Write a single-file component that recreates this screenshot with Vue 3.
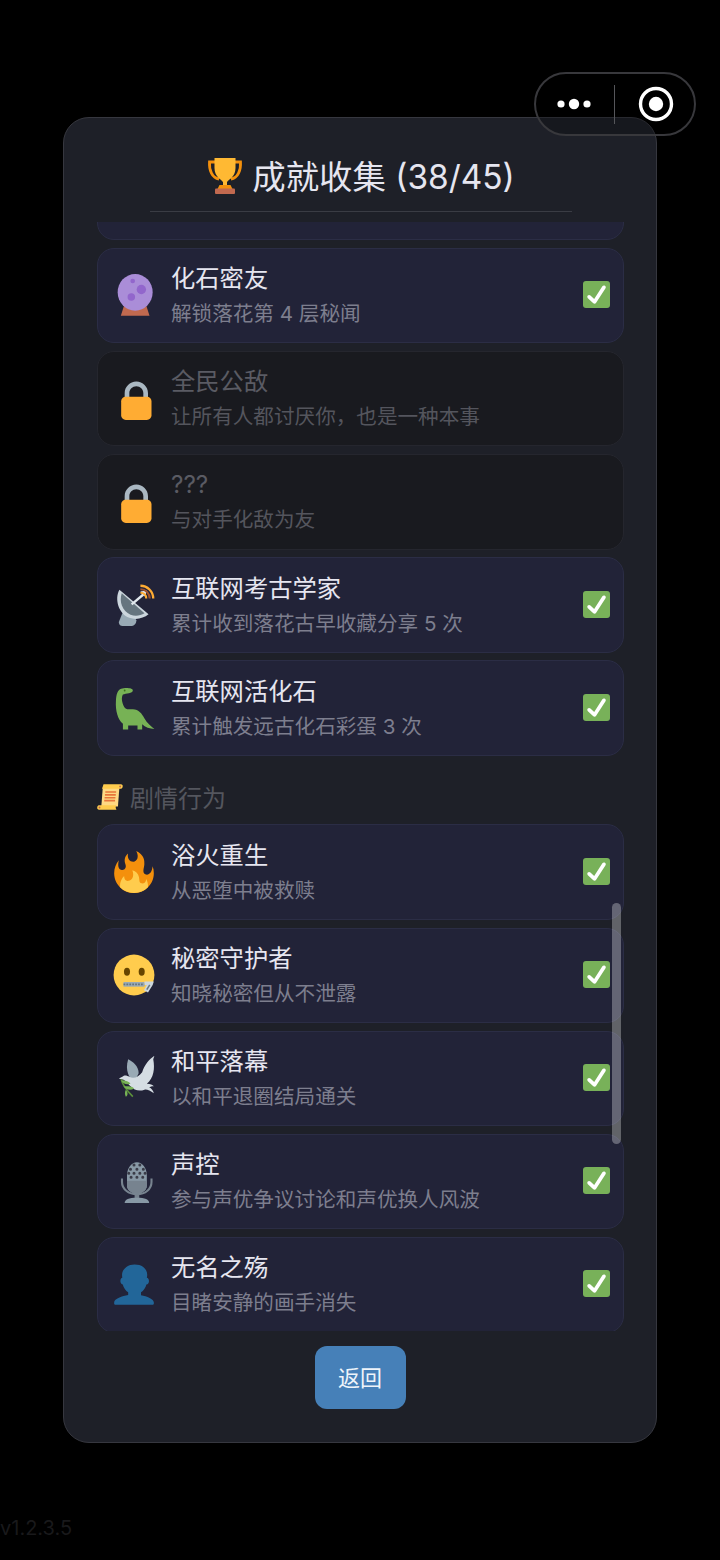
<template>
  <div class="page">
    <div class="capsule">
      <svg class="dots" width="40" height="14" viewBox="0 0 40 14">
        <circle cx="7" cy="7" r="3.6" fill="#fff" />
        <circle cx="20" cy="7" r="5.2" fill="#fff" />
        <circle cx="33" cy="7" r="3.6" fill="#fff" />
      </svg>
      <div class="capsule-line"></div>
      <svg class="target" width="36" height="36" viewBox="0 0 36 36">
        <circle cx="18" cy="18" r="15.5" fill="none" stroke="#fff" stroke-width="3.4" />
        <circle cx="18" cy="18" r="7.2" fill="#fff" />
      </svg>
    </div>

    <div class="panel">
      <div class="head">
        <h1 class="title">
          <svg class="title-icon" viewBox="0 0 36 36">
            <path d="M9 4H2.500C2 12 5 20 12 21M27 4h6.500C34 12 31 20 24 21" fill="none" stroke="#F4900C" stroke-width="2.8" />
            <path d="M7.500 0h21v10c0 9-6.500 11-8.500 14v5h-4v-5c-2-3-8.500-5-8.500-14z" fill="#FFB933" />
            <path d="M12.500 27h11l2 4h-15z" fill="#F4900C" />
            <rect x="8" y="30.500" width="20" height="5.500" rx="1" fill="#C1694F" />
          </svg>
          <span>成就收集 (38/45)</span>
        </h1>
        <div class="head-line"></div>
      </div>

      <div class="list-wrap">
        <div class="list">
          <div class="card card-cut"></div>
          <AchievementCard v-for="item in fossil" :key="item.name" :item="item" />

          <div class="section">
            <svg class="section-icon" viewBox="0 0 36 36">
              <path d="M8 5h23l-2 26H6z" fill="#FFD983" />
              <path d="M9 .5h24c2 0 3 1.500 2.500 3.500-.4 1.500-1.500 2.500-3 2.500H7z" fill="#FFCC4D" />
              <path d="M2.500 29.500h24c-.8 1-1 4 .5 6H3c-2 0-3-1.500-2.700-3 .3-1.500 1-3 2.200-3z" fill="#FFCC4D" />
              <path d="M11.500 11h15M11 15h15M10.500 19h15M10 23h15" stroke="#E8763A" stroke-width="2.200" />
              <circle cx="3.500" cy="32.500" r="1.300" fill="#C1694F" />
              <circle cx="32" cy="3.500" r="1.300" fill="#C1694F" />
            </svg>
            <span>剧情行为</span>
          </div>
          <AchievementCard v-for="item in story" :key="item.name" :item="item" />
        </div>
      </div>

      <div class="foot">
        <button class="back">返回</button>
      </div>
      <div class="scrollbar"></div>
    </div>

    <div class="version">v1.2.3.5</div>
  </div>
</template>

<script setup>
import { h } from 'vue';

const fossil = [
  { name: '化石密友', desc: '解锁落花第 4 层秘闻', icon: 'ball', done: true },
  { name: '全民公敌', desc: '让所有人都讨厌你，也是一种本事', icon: 'lock', done: false },
  { name: '???', desc: '与对手化敌为友', icon: 'lock', done: false },
  { name: '互联网考古学家', desc: '累计收到落花古早收藏分享 5 次', icon: 'dish', done: true },
  { name: '互联网活化石', desc: '累计触发远古化石彩蛋 3 次', icon: 'dino', done: true },
];

const story = [
  { name: '浴火重生', desc: '从恶堕中被救赎', icon: 'fire', done: true },
  { name: '秘密守护者', desc: '知晓秘密但从不泄露', icon: 'zip', done: true },
  { name: '和平落幕', desc: '以和平退圈结局通关', icon: 'dove', done: true },
  { name: '声控', desc: '参与声优争议讨论和声优换人风波', icon: 'mic', done: true },
  { name: '无名之殇', desc: '目睹安静的画手消失', icon: 'bust', done: true },
];

const p = (d, fill, extra = {}) => h('path', { d, fill, ...extra });

const icons = {
  ball: () => [
    p('M8.500 27c5 3.500 14 3.500 19 0l2.800 8.700H5.700z', '#C1694F'),
    h('ellipse', { cx: 18, cy: 15.700, rx: 15, ry: 15.700, fill: '#AA8DD8' }),
    h('circle', { cx: 23.300, cy: 13.300, r: 4, fill: '#9266CC' }),
    h('circle', { cx: 14.700, cy: 19.700, r: 3.200, fill: '#9266CC' }),
    h('circle', { cx: 15.900, cy: 6, r: 2, fill: '#9266CC' }),
  ],
  lock: () => [
    p('M18 3C12.477 3 8 7.477 8 13v10h4V13c0-3.313 2.687-6 6-6s6 2.687 6 6v10h4V13c0-5.523-4.477-10-10-10z', '#AAB8C2'),
    p('M31 32c0 2.209-1.791 4-4 4H9c-2.209 0-4-1.791-4-4V20c0-2.209 1.791-4 4-4h18c2.209 0 4 1.791 4 4v12z', '#FFAC33'),
  ],
  dish: () => [
    p('M8 25l10 2 2 4c0 3-2 5-5 5H9c-3 0-4-1.500-4-3.500z', '#99AAB5'),
    p('M5.500 5C1 13 5 26 14 29c6 2 12 .5 16.500-3z', '#CCD6DD'),
    p('M7.500 8C5 15 8 23.500 15 26.300c4.500 1.700 8.500 .7 12-1.300z', '#66757F'),
    p('M16 17.500L26 9', 'none', { stroke: '#E1E8ED', 'stroke-width': 2 }),
    p('M23.500 6.500l5.500-1-1.500 5.500z', '#E1E8ED'),
    p('M23.500 1.500c6 0 11 5 11 11', 'none', { stroke: '#FFAC33', 'stroke-width': 2 }),
    p('M23.500 4.500c4.500 0 8 3.500 8 8', 'none', { stroke: '#A0522D', 'stroke-width': 1.800 }),
    p('M23.500 7.500c3 0 5 2 5 5', 'none', { stroke: '#FFAC33', 'stroke-width': 1.800 }),
  ],
  dino: () => [
    p('M7 1.500C10 .5 17 .5 17 3 17 5.500 11 5.500 8.500 6.500 7 9 7.500 13 9.500 17 11 20 14 19 17 19c5 0 8 4 10 8 2 4 6 7 8.500 9-4 0-8-1.500-10.500-4v4.500h-4V33h-8v3.500H8.500v-5C4 28 2 20 2.500 12 2.800 6 4 2.500 7 1.500z', '#77B255'),
    h('circle', { cx: 10, cy: 3, r: .8, fill: '#3E721D' }),
  ],
  fire: () => [
    p('M35 19c0-2.062-.367-4.039-1.040-5.868-.46 5.389-3.333 8.157-6.335 6.868-2.812-1.208-.917-5.917-.777-8.164.236-3.809-.012-8.169-6.931-11.794 2.875 5.500.333 8.917-2.333 9.125-2.958.231-5.667-2.542-4.667-7.042-3.238 2.386-3.332 6.402-2.333 9 1.042 2.708-.042 4.958-2.583 5.208-2.840.28-4.418-3.041-2.963-8.333C2.520 10.965 1 14.805 1 19c0 9.389 7.611 17 17 17s17-7.611 17-17z', '#F4900C'),
    p('M28.394 23.999c.148 3.084-2.561 4.293-4.019 3.709-2.106-.843-1.541-2.291-2.083-5.291s-2.625-5.083-5.708-6c2.250 6.333-1.247 8.667-3.080 9.084-1.872.426-3.753-.001-3.968-4.007C7.352 23.668 6 26.676 6 30c0 .368.023.73.055 1.090C9.125 34.124 13.342 36 18 36s8.875-1.876 11.945-4.910c.032-.36.055-.722.055-1.090 0-2.187-.584-4.236-1.606-6.001z', '#FFCC4D'),
  ],
  zip: () => [
    h('circle', { cx: 18, cy: 18, r: 17.500, fill: '#FFCC4D' }),
    h('ellipse', { cx: 12, cy: 15.200, rx: 2.600, ry: 3.400, fill: '#664500' }),
    h('ellipse', { cx: 24.600, cy: 15.200, rx: 2.600, ry: 3.400, fill: '#664500' }),
    h('rect', { x: 9, y: 24, width: 18, height: 4, fill: '#99AAB5' }),
    p('M9 26h18', 'none', { stroke: '#66757F', 'stroke-width': 1.600, 'stroke-dasharray': '1.500 1' }),
    p('M27 23.500h8l-1 3-4 6.500-3.500-2 2.500-4.500H27z', '#CCD6DD'),
    p('M31.500 26.500l-2.500 4', 'none', { stroke: '#66757F', 'stroke-width': 1.300 }),
  ],
  dove: () => [
    p('M13 2c4 2 9 6 9 12l-4 8C14 18 10 12 13 2z', '#99AAB5'),
    p('M34.500 2C36 10 35 18 29 23c3 0 5 1 6 2-2 0-3 .5-4 1 2 1 3.500 3 4 5-3-2-6-3.500-8-3-5 2-9 0-12-3-3-3-5-6-8-6l-2-.5 3-1.500c2-2 4-1 6 0 4 2 8 0 11-4 2-6 6-11 10.500-14z', '#D5DDE3'),
    p('M7 19c1 5 5 10 10 15', 'none', { stroke: '#5C913B', 'stroke-width': 1.400 }),
    p('M7 20c4 0 7 1 8 3-3 1-7 0-8-3zM9 25c4 0 8 0 9 2-3 2-7 1-9-2zM11 28c-1 2-1 4 0 6 2-1 2-4 0-6z', '#77B255'),
  ],
  mic: () => [
    p('M7.700 15v3c0 6 5.500 10.500 12.800 10.500S33 24 33 18v-3', 'none', { stroke: '#77838F', 'stroke-width': 1.800 }),
    p('M12 12c0-6 4-11 8.500-11S29 6 29 12v9c0 4-4 7-8.500 7S12 25 12 21z', '#8899A6'),
    p('M12 17h17v4c0 4-4 7-8.500 7S12 25 12 21z', '#77838F'),
    p('M18 3.500h.01M23 3.500h.01M15 7h.01M20.500 7h.01M26 7h.01M13.500 10.500h.01M18 10.500h.01M23 10.500h.01M27.500 10.500h.01M15.500 14h.01M20.500 14h.01M25.500 14h.01', 'none', { stroke: '#3A3C48', 'stroke-width': 2.600, 'stroke-linecap': 'round' }),
    p('M18.500 28h4v4h-4z', '#77838F'),
    p('M10 36c0-3 3.500-4.500 10.500-4.500S31 33 31 36z', '#8899A6'),
  ],
  bust: () => [
    p('M24 26.799v-2.566c2-1.348 4.080-3.779 4.703-6.896.186.103.206.17.413.17.991 0 1.709-1.287 1.709-2.873 0-1.562-.823-2.827-1.794-2.865.187-.674.293-1.577.293-2.735C29.324 5.168 26 .527 18.541.527c-6.629 0-10.777 4.641-10.777 8.507 0 1.123.069 2.043.188 2.755-.911.137-1.629 1.352-1.629 2.845 0 1.587.804 2.873 1.796 2.873.206 0 .025-.067.209-.17C8.952 20.453 11 22.885 13 24.232v2.414c-5 .645-12 3.437-12 6.230v1.247C1 35 2.076 35 3.137 35h29.725C33.924 35 35 35 35 34.123v-1.247c0-2.627-6-5.367-11-6.077z', '#226699'),
  ],
};

const shift = { lock: '-2 0 36 36', ball: '-1 0 36 36' };

const AchievementCard = (props) => {
  const { item } = props;
  const children = [
    h('svg', { class: 'card-icon', viewBox: shift[item.icon] || '0 0 36 36' }, icons[item.icon]()),
    h('div', { class: 'card-text' }, [
      h('div', { class: 'card-name' }, item.name),
      h('div', { class: 'card-desc' }, item.desc),
    ]),
  ];
  if (item.done) {
    children.push(
      h('svg', { class: 'card-check', viewBox: '0 0 36 36' }, [
        h('rect', { width: 36, height: 36, rx: 4, fill: '#78B159' }),
        p('M29.280 6.362c-1.156-.751-2.704-.422-3.458.736L14.936 23.877l-5.029-4.650c-1.014-.938-2.596-.875-3.533.138-.937 1.014-.875 2.596.139 3.533l7.209 6.666c.481.445 1.090.665 1.696.665.82 0 1.597-.403 2.098-1.141L30.013 9.820c.751-1.158.423-2.706-.733-3.458z', '#fff'),
      ]),
    );
  }
  return h('div', { class: ['card', item.done ? '' : 'card-locked'] }, children);
};
AchievementCard.props = ['item'];
</script>

<style>
html,
body {
  margin: 0;
  background: #000;
}
</style>

<style scoped>
.page {
  position: relative;
  width: 720px;
  height: 1560px;
  padding-top: 117px;
  box-sizing: border-box;
  background: #000;
  font-family: Inter, "Noto Sans CJK SC", sans-serif;
  overflow: hidden;
}

.capsule {
  position: absolute;
  left: 534px;
  top: 72px;
  width: 162px;
  height: 64px;
  box-sizing: border-box;
  border: 2px solid #38383c;
  border-radius: 32px;
  background: rgba(0, 0, 0, 0.25);
  z-index: 2;
}

.dots {
  position: absolute;
  left: 18px;
  top: 23px;
}

.capsule-line {
  position: absolute;
  left: 78px;
  top: 11px;
  width: 1px;
  height: 39px;
  background: #55565a;
}

.target {
  position: absolute;
  left: 102px;
  top: 12px;
}

.panel {
  position: relative;
  width: 594px;
  height: 1326px;
  margin-left: 63px;
  box-sizing: border-box;
  display: flex;
  flex-direction: column;
  background: #1e2028;
  border: 1px solid #36373f;
  border-radius: 26px;
}

.head {
  height: 104px;
  flex: none;
  padding-top: 36px;
  box-sizing: border-box;
}

.title {
  margin: 0 0 0 2px;
  display: flex;
  justify-content: center;
  align-items: center;
  gap: 9px;
  height: 44px;
  font-size: 33.4px;
  font-weight: 400;
  color: #e6e6f0;
  white-space: nowrap;
}

.title span {
  position: relative;
  top: -2px;
}

.title-icon {
  width: 36px;
  height: 36px;
}

.head-line {
  width: 422px;
  height: 1px;
  margin: 13px auto 0 86px;
  background: #3a3c44;
}

.list-wrap {
  flex: 1;
  min-height: 0;
  overflow: hidden;
  padding: 0 32px 0 33px;
}

.list {
  display: flex;
  flex-direction: column;
  gap: 7.7px;
  margin-top: -77.5px;
}

.section {
  display: flex;
  align-items: center;
  gap: 7px;
  height: 50px;
  margin-top: 8px;
  margin-bottom: -5px;
  font-size: 24px;
  color: #54565e;
}

.section-icon {
  width: 26px;
  height: 26px;
}

.foot {
  flex: none;
  height: 111px;
  padding-top: 15px;
  box-sizing: border-box;
  display: flex;
  justify-content: center;
  align-items: flex-start;
}

.back {
  width: 91px;
  height: 63px;
  padding: 0 0 3px;
  border: none;
  border-radius: 12px;
  background: #4680b8;
  color: #eef4fa;
  font-family: inherit;
  font-size: 22px;
}

.scrollbar {
  position: absolute;
  left: 548px;
  top: 785px;
  width: 9px;
  height: 241px;
  border-radius: 5px;
  background: rgba(255, 255, 255, 0.3);
}

.version {
  margin-top: 71px;
  font-size: 20px;
  line-height: 28px;
  color: #19191b;
}
</style>

<style>
.card {
  display: flex;
  align-items: center;
  flex: none;
  height: 95.5px;
  box-sizing: border-box;
  padding: 0 13px 0 15px;
  background: #222338;
  border: 1px solid #2b2d45;
  border-radius: 17px;
}

.card-locked {
  background: #191a1f;
  border-color: #25262e;
}

.card-icon {
  width: 42px;
  height: 42px;
  flex: none;
  overflow: visible;
}

.card-text {
  flex: 1;
  margin-left: 16px;
  padding-top: 3px;
  min-width: 0;
}

.card-name {
  font-size: 24.3px;
  line-height: 34px;
  color: #e6e6f0;
}

.card-desc {
  font-size: 20.6px;
  line-height: 38px;
  color: #7d7e8e;
}

.card-locked .card-name {
  color: #5a5b63;
}

.card-locked .card-desc {
  color: #54555d;
}

.card-check {
  width: 27px;
  height: 27px;
  margin-bottom: 2px;
  flex: none;
}
</style>
